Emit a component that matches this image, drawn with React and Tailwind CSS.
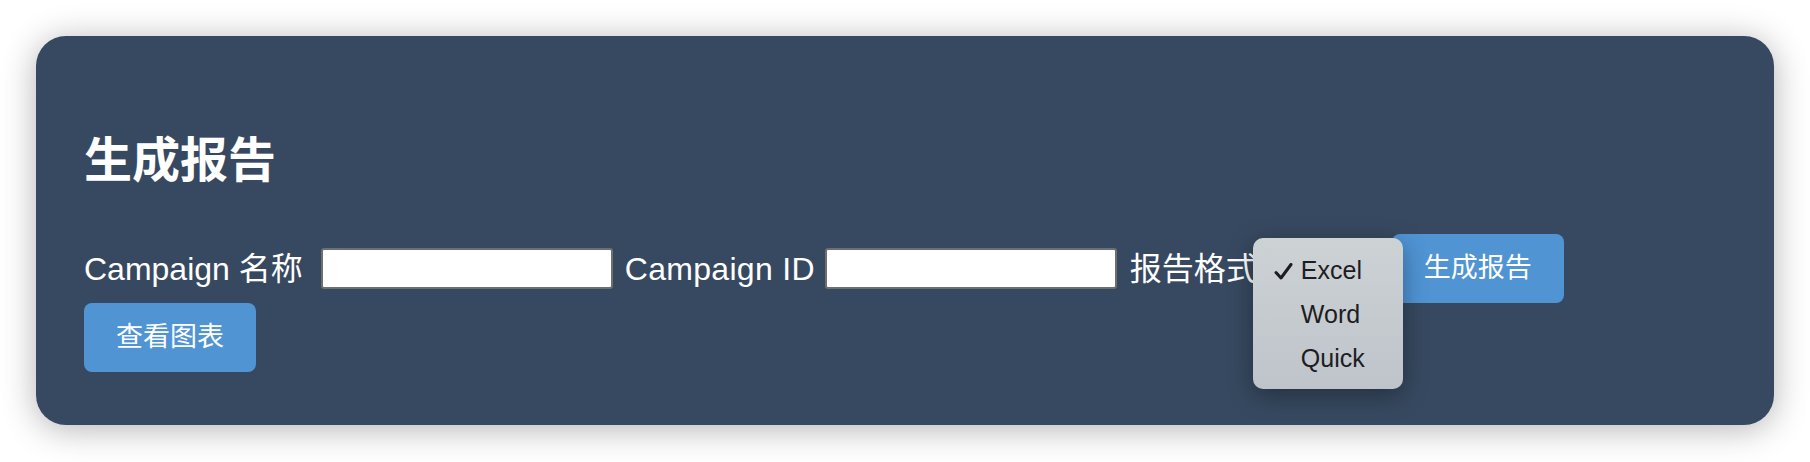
import React from 'react';

const font = { fontFamily: '"Liberation Sans", "Noto Sans CJK SC", sans-serif' };

function FormatMenu() {
  const items = ['Excel', 'Word', 'Quick'];
  return (
    <div className="absolute left-[-5px] top-[4px] w-[150px] h-[151px] rounded-[10px] bg-gradient-to-b from-[#cdd2d5] to-[#bec4ca] shadow-[0_6px_24px_rgba(0,0,0,0.35)] pt-[11px] z-10">
      {items.map((item, i) => (
        <div key={item} className="flex items-center h-[44px] text-[25px] text-[#1d1d1f]">
          <div className="w-[48px] flex justify-end pr-[8px]">
            {i === 0 && (
              <svg width="19" height="17" viewBox="0 0 19 17">
                <path d="M2 9.5 L7 15 L17 1.5" fill="none" stroke="#1d1d1f" strokeWidth="3" strokeLinecap="round" strokeLinejoin="round" />
              </svg>
            )}
          </div>
          <span>{item}</span>
        </div>
      ))}
    </div>
  );
}

function App() {
  return (
    <div className="bg-white w-[1810px] h-[462px] p-[36px]" style={font}>
      <div className="h-[389px] rounded-[30px] bg-[#374960] shadow-[0_4px_34px_rgba(0,0,0,0.3)] pt-[90px] px-12 text-white">
        <h2 className="text-[48px] font-bold leading-[70px] mb-[38px]">生成报告</h2>
        <div className="flex flex-wrap items-center text-[32px]">
          <span className="mr-[18px]">Campaign 名称</span>
          <input className="w-[292px] h-[41px] bg-white border-2 border-[#6f6f6f] rounded-[3px] mr-[12px]" />
          <span className="mr-[10px] tracking-[0.3px]">Campaign ID</span>
          <input className="w-[292px] h-[41px] bg-white border-2 border-[#6f6f6f] rounded-[3px] mr-[13px]" />
          <span>报告格式</span>
          <div className="relative w-[134px] h-[69px] flex items-center">
            <select className="w-[126px] h-[34px] bg-white text-black text-[20px] rounded-[4px]">
              <option>Excel</option>
              <option>Word</option>
              <option>Quick</option>
            </select>
            <FormatMenu />
          </div>
          <button className="h-[69px] px-[32px] bg-[#5094d4] rounded-lg text-[27px] text-white">生成报告</button>
          <div className="basis-full h-0" />
          <button className="h-[69px] px-[32px] bg-[#5094d4] rounded-lg text-[27px] text-white">查看图表</button>
        </div>
      </div>
    </div>
  );
}

export default App;
